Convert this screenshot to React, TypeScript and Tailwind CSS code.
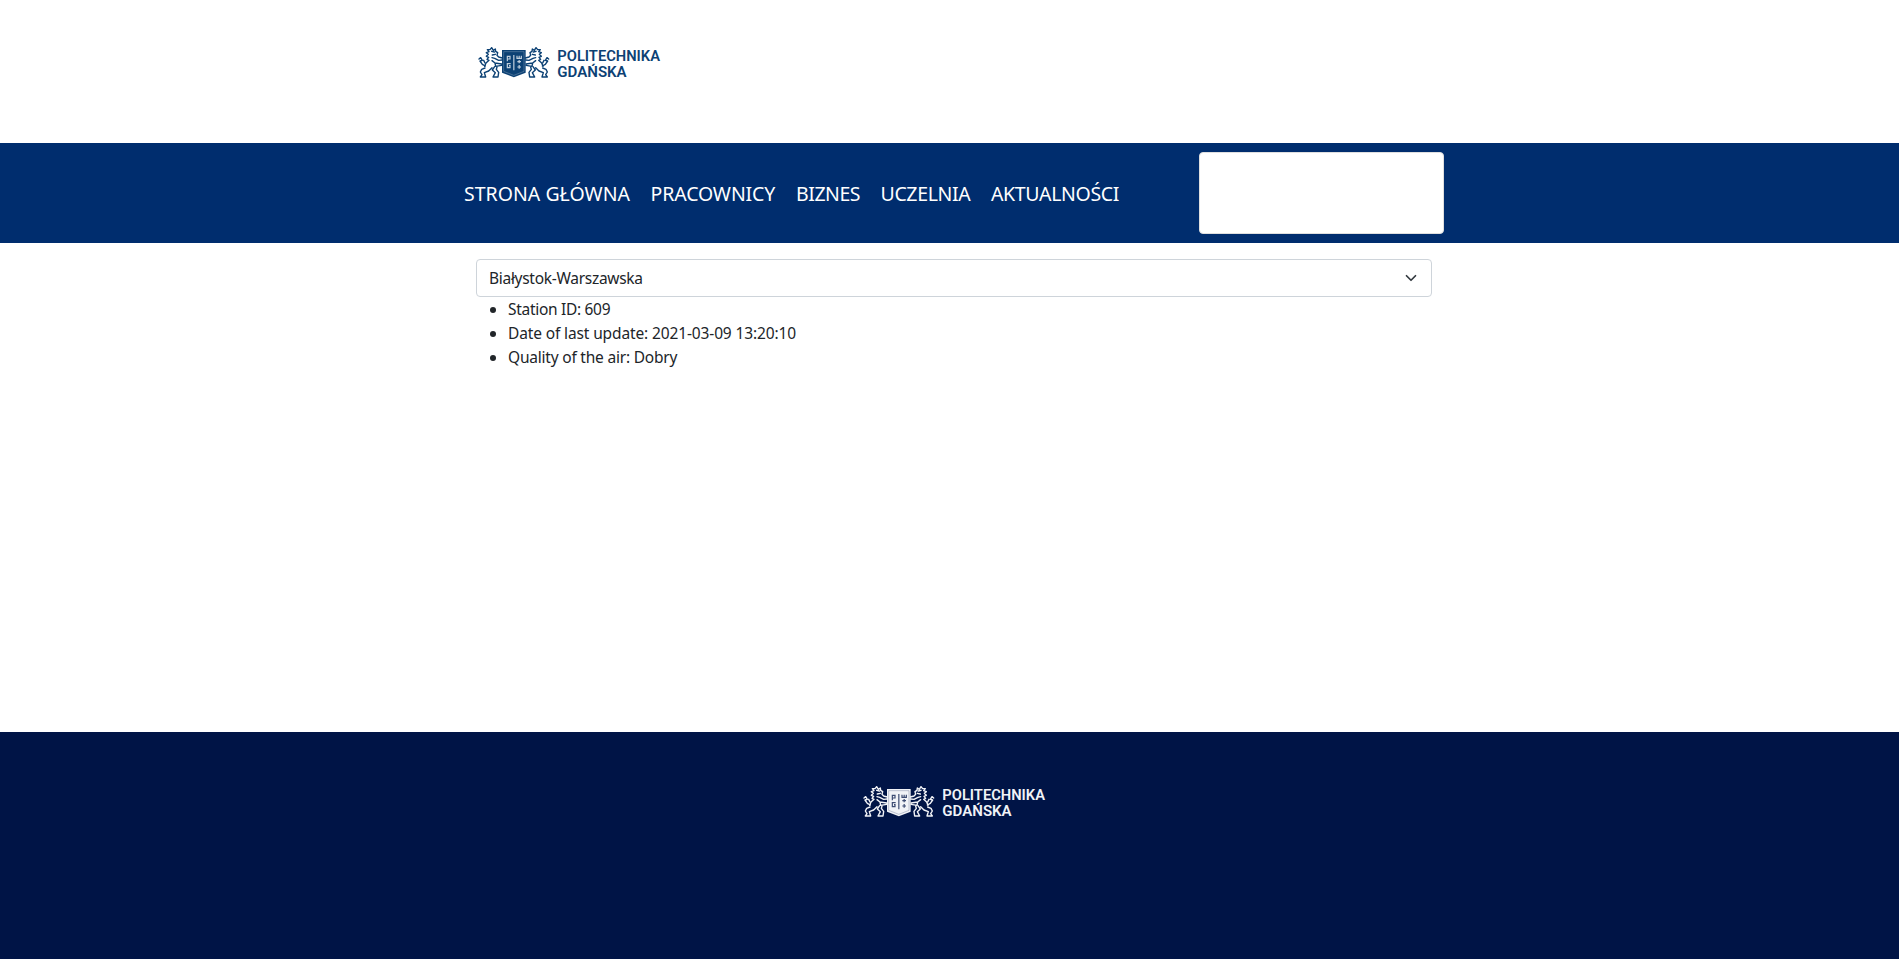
import React from "react";

const navItems = [
  { label: "STRONA GŁÓWNA", cls: "w-[165px] tracking-[0.02px]" },
  { label: "PRACOWNICY", cls: "w-[124px] tracking-[-0.12px]" },
  { label: "BIZNES", cls: "w-[63px] tracking-[-0.45px]" },
  { label: "UCZELNIA", cls: "w-[89px] tracking-[-0.36px]" },
  { label: "AKTUALNOŚCI", cls: "w-[129px] tracking-[-0.34px]" },
];

const details = [
  { text: "Station ID: 609", cls: "tracking-[-0.3px]" },
  { text: "Date of last update: 2021-03-09 13:20:10", cls: "tracking-[-0.13px]" },
  { text: "Quality of the air: Dobry", cls: "tracking-[-0.21px]" },
];

function Lion() {
  return (
    <g fill="none" stroke="currentColor" strokeWidth="4.200" strokeLinejoin="round" strokeLinecap="round">
      <path d="M97 69L86 66L81 61L83 53L77 49L76 42L70 46L65 38L60 44L52 44L57 50L49 53L55 58L49 64L56 67L51 73L57 76L48 84L44 94" />
      <path d="M65 49L73 51M76 58L67 60M66 68L74 70L86 76L96 75M66 77L75 84L95 87M75 84L77 94L95 91" />
      <path d="M46 93L37 88L30 78L37 76L32 68L27 72M41 76L45 84" />
      <path d="M45 99L35 103L31 111L36 119L31 126H47L43 113L56 108L66 98M74 95L67 105L76 113L69 126H84L86 112L79 103L81 96" />
    </g>
  );
}

function Logo({ className, letters }: { className: string; letters: string }) {
  return (
    <svg
      className={className}
      width="200"
      height="55"
      viewBox="0 0 600 165"
      role="img"
      aria-label="Politechnika Gdańska"
    >
      <Lion />
      <g transform="translate(263 0) scale(-1 1)">
        <Lion />
      </g>
      <path d="M96 45H167V113L131.500 127L96 113Z" fill="currentColor" />
      <path d="M101 50H162V109L131.500 121L101 109Z" fill="none" stroke={letters} strokeWidth="1.500" opacity="0.45" />
      <g fill="none" stroke={letters} strokeWidth="3.600" opacity="0.75">
        <path d="M112 79V64H120V72H112M122 86H112V98H120V92H117M131.500 60V106" />
        <path d="M141 62V70H154V62M147.500 62V70M147.500 75V85M142 80H153M147.500 90V101M142 96H153" />
      </g>
      <g fill="currentColor" fontFamily="Roboto, sans-serif" fontWeight="600" fontSize="46">
        <text x="262" y="79" textLength="308" lengthAdjust="spacingAndGlyphs">POLITECHNIKA</text>
        <text x="262" y="124.500" textLength="208" lengthAdjust="spacingAndGlyphs">GDAŃSKA</text>
      </g>
    </svg>
  );
}

export default function App() {
  return (
    <div className="flex h-[959px] w-full flex-col overflow-hidden bg-white font-['Noto_Sans',sans-serif] text-[#212529]">
      <header className="h-[143px] shrink-0 pt-[35px] pl-[470px]">
        <Logo className="text-[#0c4174]" letters="#ffffff" />
      </header>
      <nav className="flex h-[100px] shrink-0 items-center bg-[#002d6e] pl-[464px] text-white">
        <ul className="flex w-[735px] gap-[21.5px] pt-[2px] text-[19.5px] leading-[30px]">
          {navItems.map((item) => (
            <li key={item.label} className={`shrink-0 whitespace-nowrap ${item.cls}`}>
              {item.label}
            </li>
          ))}
        </ul>
        <div className="h-[82px] w-[245px] rounded-[4px] border border-[#dfdfdf] bg-white" />
      </nav>
      <main className="w-[1432px] flex-1 pt-4 pl-[476px]">
        <div className="flex h-[38px] items-center justify-between rounded-[4px] border border-[#ced4da] pr-[12px] pl-[12px]">
          <span className="text-[15.5px] leading-6 tracking-[-0.29px]">Białystok-Warszawska</span>
          <svg width="16" height="12" viewBox="0 0 16 16">
            <path
              d="M2 5l6 6 6-6"
              fill="none"
              stroke="#343a40"
              strokeWidth="2.300"
              strokeLinecap="round"
              strokeLinejoin="round"
            />
          </svg>
        </div>
        <ul className="pl-[14px] text-[15.5px] leading-6">
          {details.map((item) => (
            <li key={item.text} className={`flex items-center gap-3 ${item.cls}`}>
              <span className="mt-0.5 size-1.5 rounded-full bg-[#212529]" />
              {item.text}
            </li>
          ))}
        </ul>
      </main>
      <footer className="h-[227px] shrink-0 bg-[#001446] pt-[42px] pl-[854.5px]">
        <Logo className="text-[#f1f3f7]" letters="#001446" />
      </footer>
    </div>
  );
}
